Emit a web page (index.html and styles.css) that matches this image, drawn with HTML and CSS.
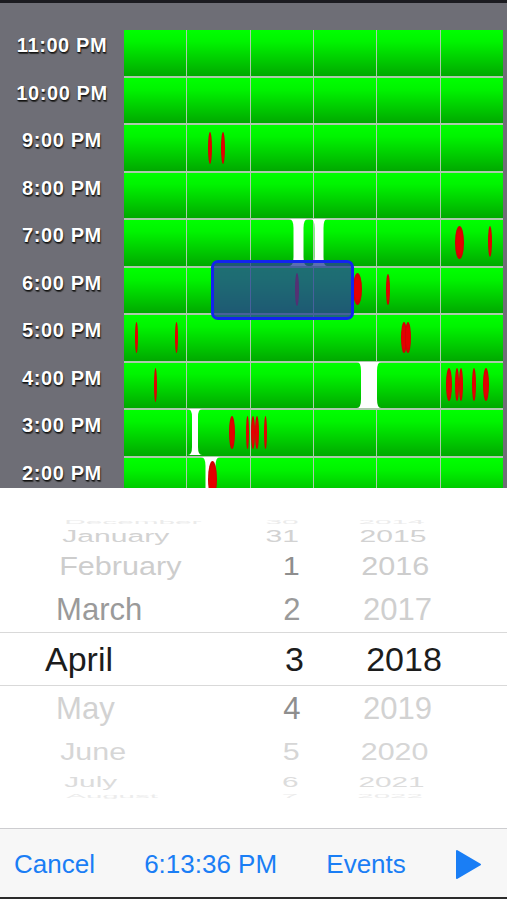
FILE: index.html
```html
<!DOCTYPE html>
<html lang="en">
<head>
    <meta charset="UTF-8">
    <meta name="viewport" content="width=device-width, initial-scale=1.0">
    <title>Schedule</title>
    <link rel="stylesheet" href="styles.css">
</head>
<body>

<div class="screen">
    <div class="topbar"></div>

    <!-- Hour chart -->
    <div class="chart">
        <div class="labels">
            <div class="label">11:00 PM</div>
            <div class="label">10:00 PM</div>
            <div class="label">9:00 PM</div>
            <div class="label">8:00 PM</div>
            <div class="label">7:00 PM</div>
            <div class="label">6:00 PM</div>
            <div class="label">5:00 PM</div>
            <div class="label">4:00 PM</div>
            <div class="label">3:00 PM</div>
            <div class="label">2:00 PM</div>
        </div>

        <div class="grid">
            <!-- 11 PM -->
            <div class="cell"></div><div class="cell"></div><div class="cell"></div><div class="cell"></div><div class="cell"></div><div class="cell"></div>
            <!-- 10 PM -->
            <div class="cell"></div><div class="cell"></div><div class="cell"></div><div class="cell"></div><div class="cell"></div><div class="cell"></div>
            <!-- 9 PM -->
            <div class="cell"></div><div class="cell"></div><div class="cell"></div><div class="cell"></div><div class="cell"></div><div class="cell"></div>
            <!-- 8 PM -->
            <div class="cell"></div><div class="cell"></div><div class="cell"></div><div class="cell"></div><div class="cell"></div><div class="cell"></div>
            <!-- 7 PM -->
            <div class="cell"></div><div class="cell"></div><div class="cell"></div><div class="cell"></div><div class="cell"></div><div class="cell"></div>
            <!-- 6 PM -->
            <div class="cell"></div><div class="cell"></div><div class="cell"></div><div class="cell"></div><div class="cell"></div><div class="cell"></div>
            <!-- 5 PM -->
            <div class="cell"></div><div class="cell"></div><div class="cell"></div><div class="cell"></div><div class="cell"></div><div class="cell"></div>
            <!-- 4 PM -->
            <div class="cell"></div><div class="cell"></div><div class="cell"></div><div class="cell"></div><div class="cell"></div><div class="cell"></div>
            <!-- 3 PM -->
            <div class="cell"></div><div class="cell"></div><div class="cell"></div><div class="cell"></div><div class="cell"></div><div class="cell"></div>
            <!-- 2 PM -->
            <div class="cell"></div><div class="cell"></div><div class="cell"></div><div class="cell"></div><div class="cell"></div><div class="cell"></div>

            <!-- Gaps -->
            <svg class="beam" style="left:165px;top:189px" width="19" height="47" viewBox="0 0 19 47"><path d="M0 0H19Q14.5 0 14.5 9V38Q14.5 47 19 47H0Q4.5 47 4.5 38V9Q4.5 0 0 0Z"/></svg>
            <svg class="beam" style="left:187px;top:189px" width="16" height="47" viewBox="0 0 16 47"><path d="M0 0H16Q12.5 0 12.5 9V38Q12.5 47 16 47H0Q3.5 47 3.5 38V9Q3.5 0 0 0Z"/></svg>
            <svg class="beam" style="left:233px;top:332px" width="24" height="46" viewBox="0 0 24 46"><path d="M0 0H24Q20 0 20 9V37Q20 46 24 46H0Q4 46 4 37V9Q4 0 0 0Z"/></svg>
            <svg class="beam" style="left:64px;top:379px" width="14" height="46" viewBox="0 0 14 46"><path d="M0 0H14Q10 0 10 8V38Q10 46 14 46H0Q4 46 4 38V8Q4 0 0 0Z"/></svg>
            <svg class="beam" style="left:77px;top:427px" width="19" height="46" viewBox="0 0 19 46"><path d="M0 0H19Q14.5 0 14.5 9V37Q14.5 46 19 46H0Q4.5 46 4.5 37V9Q4.5 0 0 0Z"/></svg>

            <!-- Events -->
            <div class="event" style="left:84px;top:102px;height:32px"></div>
            <div class="event" style="left:97px;top:102px;height:32px"></div>

            <div class="event wide" style="left:331px;top:196px;height:33px"></div>
            <div class="event" style="left:364px;top:196px;height:31px"></div>

            <div class="event" style="left:171px;top:243px;height:33px"></div>
            <div class="event wide" style="left:229px;top:243px;height:32px"></div>
            <div class="event" style="left:262px;top:244px;height:31px"></div>

            <div class="event thin" style="left:11px;top:292px;height:31px"></div>
            <div class="event thin" style="left:51px;top:292px;height:31px"></div>
            <div class="event mid" style="left:277px;top:292px;height:31px"></div>
            <div class="event mid" style="left:281px;top:292px;height:31px"></div>

            <div class="event thin" style="left:30px;top:338px;height:34px"></div>
            <div class="event mid" style="left:322px;top:338px;height:33px"></div>
            <div class="event" style="left:331px;top:338px;height:33px"></div>
            <div class="event" style="left:335px;top:338px;height:33px"></div>
            <div class="event" style="left:348px;top:338px;height:33px"></div>
            <div class="event mid" style="left:359px;top:338px;height:33px"></div>

            <div class="event mid" style="left:105px;top:386px;height:33px"></div>
            <div class="event thin" style="left:122px;top:386px;height:33px"></div>
            <div class="event" style="left:127px;top:386px;height:33px"></div>
            <div class="event" style="left:131px;top:386px;height:33px"></div>
            <div class="event thin" style="left:140px;top:386px;height:33px"></div>

            <div class="event wide" style="left:84px;top:431px;height:36px"></div>

            <div class="selection"></div>
        </div>
    </div>

    <!-- Date picker -->
    <div class="picker">
        <div class="wheel-row far-top"><span>December</span><span class="day">30</span><span class="year">2014</span></div>
        <div class="wheel-row jan"><span>January</span><span class="day">31</span><span class="year">2015</span></div>
        <div class="wheel-row feb"><span>February</span><span class="day mid">1</span><span class="year">2016</span></div>
        <div class="wheel-row mar"><span class="mid">March</span><span class="day mid">2</span><span class="year">2017</span></div>
        <div class="wheel-row selected"><span>April</span><span class="day">3</span><span class="year">2018</span></div>
        <div class="wheel-row may"><span>May</span><span class="day mid">4</span><span class="year">2019</span></div>
        <div class="wheel-row jun"><span>June</span><span class="day">5</span><span class="year">2020</span></div>
        <div class="wheel-row jul"><span>July</span><span class="day">6</span><span class="year">2021</span></div>
        <div class="wheel-row far-bottom"><span>August</span><span class="day">7</span><span class="year">2022</span></div>
    </div>

    <!-- Toolbar -->
    <div class="toolbar">
        <span>Cancel</span>
        <span>6:13:36 PM</span>
        <span>Events</span>
        <svg class="play" width="27" height="31" viewBox="0 0 27 31"><path d="M2 2L25 15.5L2 29Z"/></svg>
    </div>
    <div class="bottombar"></div>
</div>

</body>
</html>
```

FILE: styles.css
```css
body {
    margin: 0;
    font-family: "Liberation Sans", Arial, sans-serif;
    background: #fff;
}
.screen {
    width: 507px;
    height: 900px;
    overflow: hidden;
    display: flex;
    flex-direction: column;
}
.topbar {
    height: 3px;
    background: #1b1b20;
}

/* chart */
.chart {
    height: 485px;
    flex-shrink: 0;
    display: flex;
    overflow: hidden;
    background: #6e6e76;
}
.labels {
    width: 124px;
    flex-shrink: 0;
    padding-top: 19px;
}
.label {
    height: 47.5px;
    line-height: 47.5px;
    text-align: center;
    color: #fff;
    font-size: 20px;
    font-weight: bold;
    letter-spacing: 0.6px;
    text-shadow: 0 1px 1px #111, 1px 2px 1px #333;
}
.grid {
    position: relative;
    align-self: flex-start;
    width: 379px;
    margin-top: 27px;
    display: grid;
    grid-template-columns: repeat(6, 1fr);
    grid-auto-rows: 45.5px;
    gap: 2px 1px;
    background: #adc9ad;
}
.cell {
    background: linear-gradient(#00ff00, #00f400 25%, #00a900);
}
.beam {
    position: absolute;
    fill: #fff;
}
.event {
    position: absolute;
    width: 4px;
    border-radius: 50%;
    background: radial-gradient(ellipse at center, #e40000 45%, #b00000 100%);
}
.event.thin {
    width: 3px;
}
.event.mid {
    width: 6px;
}
.event.wide {
    width: 9px;
}
.selection {
    position: absolute;
    left: 87px;
    top: 230px;
    width: 143px;
    height: 60px;
    box-sizing: border-box;
    border: 3px solid #1224ee;
    border-radius: 7px;
    background: rgba(39, 64, 151, 0.76);
}

/* picker */
.picker {
    height: 340px;
    flex-shrink: 0;
    box-sizing: border-box;
    padding-top: 30px;
    overflow: hidden;
    background: #fff;
}
.wheel-row {
    display: grid;
    grid-template-columns: 200px 52px 200px;
    padding-left: 50px;
    font-size: 32px;
    white-space: nowrap;
    color: #d2d2d2;
    transform-origin: 253px 50%;
}
.wheel-row .day {
    text-align: right;
}
.wheel-row .year {
    text-align: center;
}
.wheel-row .mid {
    color: #8e8e8e;
}
.far-top {
    height: 8px;
    line-height: 8px;
    color: #ebebeb;
    transform: scale(0.93, 0.16);
}
.jan {
    height: 20px;
    line-height: 20px;
    transform: scale(0.94, 0.52);
}
.feb {
    height: 40px;
    line-height: 40px;
    color: #cdcdcd;
    transform: scale(0.955, 0.79);
}
.mar {
    height: 46px;
    line-height: 46px;
    color: #cfcfcf;
    transform: scale(0.97, 0.96);
}
.mar .mid {
    color: #9a9a9a;
}
.selected {
    height: 54px;
    line-height: 52px;
    box-sizing: border-box;
    border-top: 1px solid #d9d9d9;
    border-bottom: 1px solid #d9d9d9;
    padding-left: 45px;
    grid-template-columns: 206px 53px 200px;
    font-size: 34px;
    color: #1c1c1c;
}
.may {
    height: 44px;
    line-height: 44px;
    transform: scale(0.97, 0.96);
}
.jun {
    height: 44px;
    line-height: 44px;
    color: #d6d6d6;
    transform: scale(0.95, 0.74);
}
.jul {
    height: 16px;
    line-height: 16px;
    color: #dcdcdc;
    transform: scale(0.93, 0.48);
}
.far-bottom {
    height: 12px;
    line-height: 12px;
    color: #ececec;
    transform: scale(0.92, 0.16);
}

/* toolbar */
.toolbar {
    height: 69px;
    flex-shrink: 0;
    border-top: 1px solid #cdcdd0;
    background: #f7f7f7;
    display: flex;
    align-items: center;
    justify-content: space-between;
    padding: 2px 25px 0 14px;
    box-sizing: border-box;
    color: #1a7ef5;
    font-size: 26px;
}
.play {
    fill: #1a7ef5;
    stroke: #1a7ef5;
    stroke-width: 2;
    stroke-linejoin: round;
}
.bottombar {
    height: 2px;
    background: #2b2b2b;
}
```
